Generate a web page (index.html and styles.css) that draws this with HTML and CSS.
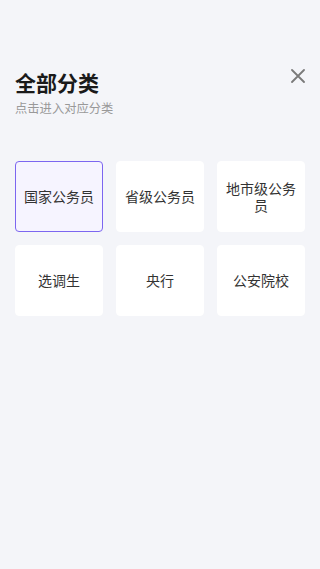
FILE: index.html
```html
<!DOCTYPE html>
<html lang="zh">
<head>
<meta charset="utf-8">
<link rel="stylesheet" href="styles.css">
</head>
<body>
<div class="page">
  <header class="head">
    <div class="titles">
      <h1 class="title">全部分类</h1>
      <p class="sub">点击进入对应分类</p>
    </div>
    <button class="close" aria-label="关闭">
      <svg width="14" height="14" viewBox="0 0 14 14"><path d="M1 1L13 13M13 1L1 13" stroke="#7a7a7a" stroke-width="1.8" stroke-linecap="round"/></svg>
    </button>
  </header>
  <div class="grid">
    <div class="card active">国家公务员</div>
    <div class="card">省级公务员</div>
    <div class="card">地市级公务员</div>
    <div class="card">选调生</div>
    <div class="card">央行</div>
    <div class="card">公安院校</div>
  </div>
</div>
</body>
</html>
```
FILE: styles.css
```css
* { box-sizing: border-box; }
html, body { margin: 0; padding: 0; }
body {
  background: #f4f5f9;
  font-family: "Noto Sans CJK SC", "Noto Sans", sans-serif;
  width: 320px;
  height: 569px;
}
.page { padding: 66px 15px 0 15px; }
.head { display: flex; justify-content: space-between; align-items: flex-start; }
.title {
  margin: 0;
  font-size: 21px;
  line-height: 32px;
  font-weight: 700;
  color: #1a1a1a;
}
.sub {
  margin: 2px 0 0 0;
  font-size: 12.3px;
  line-height: 16px;
  color: #999;
}
.close {
  border: 0; background: none; padding: 0;
  width: 14px; height: 14px;
  margin-top: 3px;
  display: flex;
}
.grid {
  margin-top: 45px;
  display: grid;
  grid-template-columns: repeat(3, 1fr);
  gap: 13px;
}
.card {
  height: 71px;
  background: #fff;
  border-radius: 4px;
  border: 1px solid #fff;
  display: flex;
  align-items: center;
  justify-content: center;
  text-align: center;
  font-size: 14px;
  line-height: 17px;
  color: #333;
  padding: 0 5px;
}
.card.active {
  background: #f6f4ff;
  border-color: #7c66f0;
}
```
